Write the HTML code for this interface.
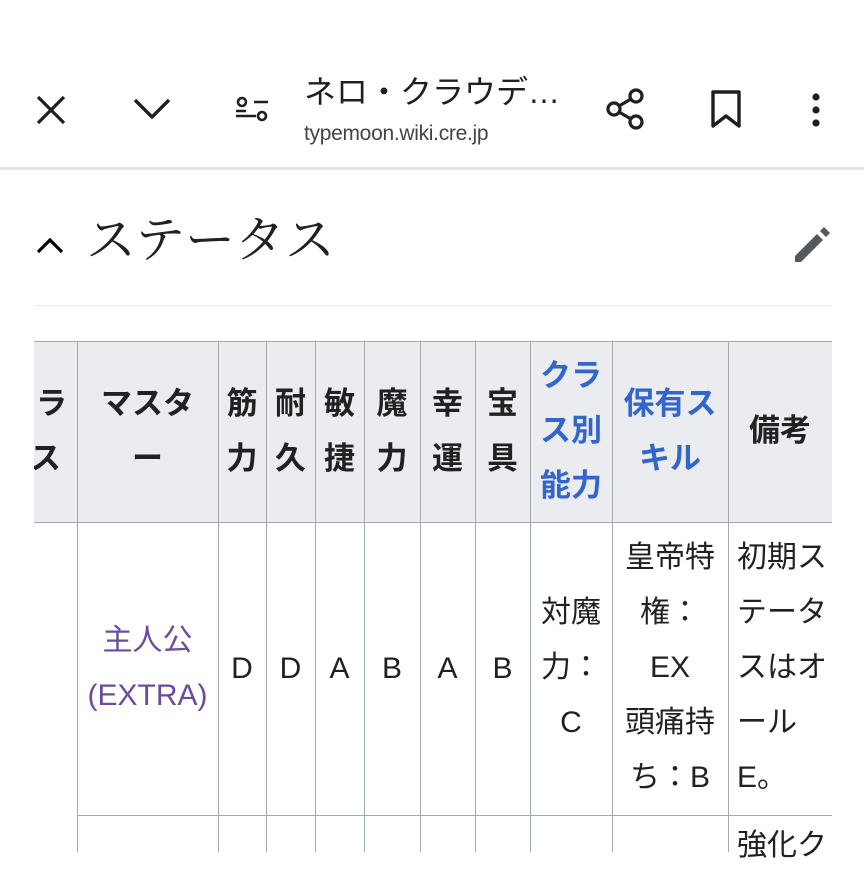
<!DOCTYPE html>
<html><head><meta charset="utf-8"><style>
*{margin:0;padding:0;box-sizing:border-box}
body{width:864px;height:852px;overflow:hidden;background:#fff;position:relative;font-family:"Liberation Sans","Noto Sans CJK JP",sans-serif;color:#202122}
.a{position:absolute}
.c{position:absolute;text-align:center;font-size:30px;line-height:55px}
.h{font-weight:bold;color:#202122;font-size:31px}
.l{color:#3366cc}
.vl{position:absolute;width:1px;background:#a2a9b1}
.hl{position:absolute;height:1px;background:#a2a9b1}
</style></head><body>
<!-- top bar -->
<svg class="a" style="left:34px;top:93px" width="34" height="34" viewBox="0 0 34 34"><path d="M4 4L30 30M30 4L4 30" stroke="#1f1f1f" stroke-width="3.2"/></svg>
<svg class="a" style="left:132px;top:96px" width="40" height="26" viewBox="0 0 40 26"><path d="M3 4L20 21L37 4" stroke="#1f1f1f" stroke-width="3.4" fill="none"/></svg>
<svg class="a" style="left:234px;top:96px" width="36" height="28" viewBox="0 0 36 28"><circle cx="8" cy="6" r="4" stroke="#1f1f1f" stroke-width="2.6" fill="none"/><path d="M2 15H12M20 6H34" stroke="#1f1f1f" stroke-width="2.6"/><circle cx="28" cy="20" r="4" stroke="#1f1f1f" stroke-width="2.6" fill="none"/><path d="M2 20H22" stroke="#1f1f1f" stroke-width="2.6"/></svg>
<div class="a" style="left:304px;top:72px;font-size:32px;color:#1f1f1f;line-height:40px">ネロ・クラウデ…</div>
<div class="a" style="left:304px;top:119px;font-size:21px;color:#444;line-height:30px;letter-spacing:-0.3px">typemoon.wiki.cre.jp</div>
<svg class="a" style="left:604px;top:86px" width="44" height="46" viewBox="0 0 44 46"><circle cx="32" cy="10" r="6" stroke="#1f1f1f" stroke-width="3.2" fill="none"/><circle cx="10" cy="23" r="6" stroke="#1f1f1f" stroke-width="3.2" fill="none"/><circle cx="32" cy="36" r="6" stroke="#1f1f1f" stroke-width="3.2" fill="none"/><path d="M15 20L27 13M15 26L27 33" stroke="#1f1f1f" stroke-width="3.2"/></svg>
<svg class="a" style="left:708px;top:89px" width="36" height="40" viewBox="0 0 36 40"><path d="M5 3H31V37L18 27L5 37Z" stroke="#1f1f1f" stroke-width="3.4" fill="none" stroke-linejoin="round"/></svg>
<svg class="a" style="left:808px;top:92px" width="16" height="38" viewBox="0 0 16 38"><circle cx="8" cy="5" r="3.6" fill="#1f1f1f"/><circle cx="8" cy="18" r="3.6" fill="#1f1f1f"/><circle cx="8" cy="31" r="3.6" fill="#1f1f1f"/></svg>
<div class="a" style="left:0;top:167px;width:864px;height:3px;background:#e2e2e2"></div>
<!-- section -->
<svg class="a" style="left:34px;top:234px" width="32" height="22" viewBox="0 0 32 22"><path d="M4 18L16 6L28 18" stroke="#000" stroke-width="3.2" fill="none"/></svg>
<div class="a" style="left:86px;top:210px;font-family:'Liberation Serif','Noto Serif CJK SC',serif;font-size:50px;line-height:60px;color:#202122">ステータス</div>
<svg class="a" style="left:790px;top:225px" width="42" height="42" viewBox="0 0 42 42"><path d="M5 31L27 9L33 15L11 37H5Z M30 6L34 2L40 8L36 12Z" fill="#54595d"/></svg>
<div class="a" style="left:34px;top:305px;width:798px;height:1px;background:#eaecf0"></div>
<!-- table -->
<div class="a" style="left:34px;top:341px;width:798px;height:181px;background:#eaecf0"></div>
<div class="hl" style="left:34px;top:341px;width:798px"></div>
<div class="hl" style="left:34px;top:522px;width:798px"></div>
<div class="hl" style="left:77px;top:815px;width:755px"></div>
<div class="vl" style="left:77px;top:341px;height:511px"></div>
<div class="vl" style="left:218px;top:341px;height:511px"></div>
<div class="vl" style="left:266px;top:341px;height:511px"></div>
<div class="vl" style="left:315px;top:341px;height:511px"></div>
<div class="vl" style="left:364px;top:341px;height:511px"></div>
<div class="vl" style="left:420px;top:341px;height:511px"></div>
<div class="vl" style="left:475px;top:341px;height:511px"></div>
<div class="vl" style="left:530px;top:341px;height:511px"></div>
<div class="vl" style="left:612px;top:341px;height:511px"></div>
<div class="vl" style="left:728px;top:341px;height:511px"></div>
<div class="a" style="left:34px;top:341px;width:43px;height:181px;overflow:hidden">
  <div class="c h" style="left:2px;top:35px;width:40px;text-align:left">ラ</div>
  <div class="c h" style="left:-4px;top:90px;width:40px;text-align:left">ス</div>
</div>
<div class="c h" style="left:77px;top:376px;width:141px">マスタ<br>ー</div>
<div class="c h" style="left:218px;top:376px;width:48px">筋<br>力</div>
<div class="c h" style="left:266px;top:376px;width:49px">耐<br>久</div>
<div class="c h" style="left:315px;top:376px;width:49px">敏<br>捷</div>
<div class="c h" style="left:364px;top:376px;width:56px">魔<br>力</div>
<div class="c h" style="left:420px;top:376px;width:55px">幸<br>運</div>
<div class="c h" style="left:475px;top:376px;width:55px">宝<br>具</div>
<div class="c h l" style="left:530px;top:348px;width:82px">クラ<br>ス別<br>能力</div>
<div class="c h l" style="left:612px;top:376px;width:116px">保有ス<br>キル</div>
<div class="c h" style="left:728px;top:403px;width:104px">備考</div>
<div class="c" style="left:77px;top:613px;width:141px;color:#6b4ba1">主人公<br>(EXTRA)</div>
<div class="c" style="left:218px;top:641px;width:48px">D</div>
<div class="c" style="left:266px;top:641px;width:49px">D</div>
<div class="c" style="left:315px;top:641px;width:49px">A</div>
<div class="c" style="left:364px;top:641px;width:56px">B</div>
<div class="c" style="left:420px;top:641px;width:55px">A</div>
<div class="c" style="left:475px;top:641px;width:55px">B</div>
<div class="c" style="left:530px;top:585px;width:82px">対魔<br>力：<br>C</div>
<div class="c" style="left:612px;top:530px;width:116px">皇帝特<br>権：<br>EX<br>頭痛持<br>ち：B</div>
<div class="c" style="left:737px;top:530px;width:95px;text-align:left;overflow:hidden;white-space:nowrap">初期ス<br>テータ<br>スはオ<br>ール<br>E。</div>
<div class="c" style="left:737px;top:818px;width:95px;text-align:left;overflow:hidden;white-space:nowrap">強化ク</div>
</body></html>
